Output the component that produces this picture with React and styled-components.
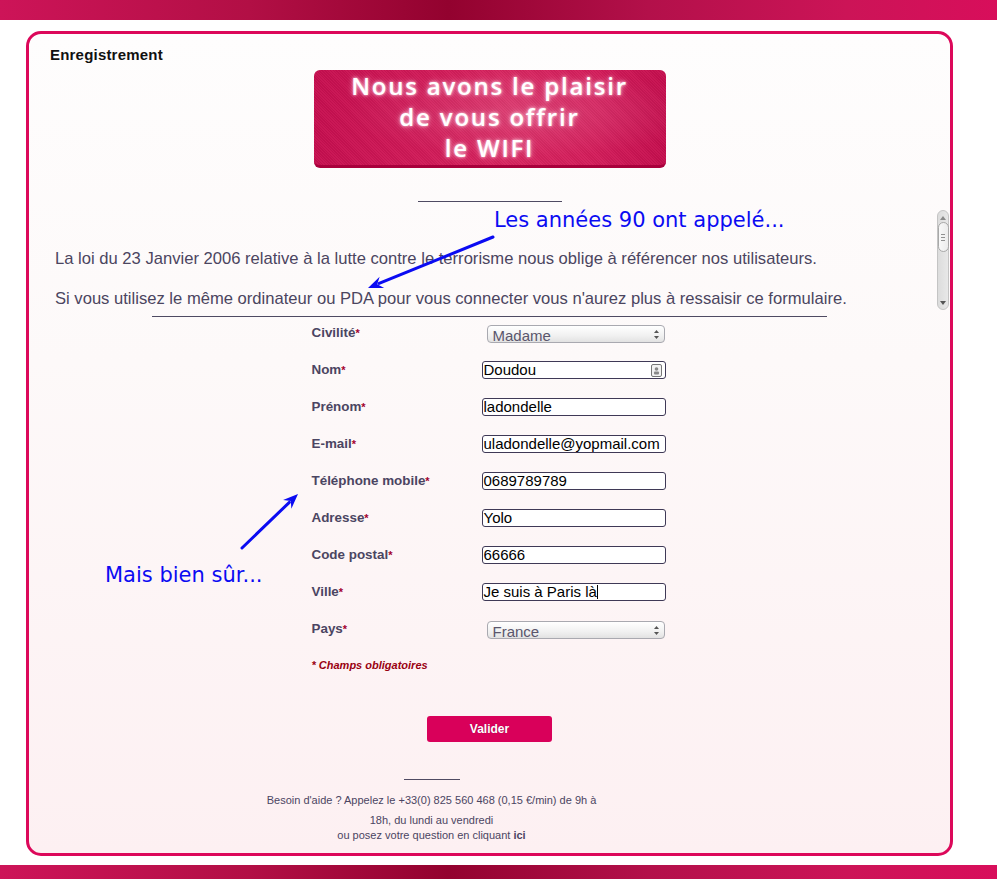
import React from "react";
import styled, { createGlobalStyle } from "styled-components";

const GlobalStyle = createGlobalStyle`
  html, body { margin: 0; padding: 0; background: #ffffff; }
  body { font-family: "Liberation Sans", Arial, sans-serif; overflow: hidden; }
  * { box-sizing: border-box; }
`;

const barGradient = `linear-gradient(90deg, #cd1458 0%, #b20f45 25%, #93022f 45%, #b3104a 65%, #cc1457 85%, #d80e5b 100%)`;

const Page = styled.div`
  position: relative;
  width: 997px;
  height: 879px;
  display: flex;
  flex-direction: column;
`;

const Bar = styled.div`
  height: ${(p) => p.$h}px;
  flex: none;
  background: ${barGradient};
`;

const Card = styled.div`
  margin: 11px 0 9px 26px;
  width: 927px;
  border: 3px solid #dc085a;
  border-radius: 15px;
  background: linear-gradient(180deg, #fefdfd 0%, #fdf9f9 40%, #fdf0f2 100%);
  display: flex;
  flex-direction: column;
  padding: 12px 0 11px 0;
  flex: none;
`;

const Title = styled.h1`
  margin: 0 0 0 21px;
  font-size: 15px;
  line-height: 18px;
  font-weight: bold;
  color: #111;
  letter-spacing: 0.2px;
`;

const Banner = styled.div`
  align-self: center;
  margin-top: 6px;
  width: 352px;
  height: 98px;
  border-radius: 6px;
  border-bottom: 3px solid #a9003c;
  background:
    radial-gradient(ellipse at 60% 45%, rgba(255,255,255,0.12) 0%, rgba(255,255,255,0) 60%),
    repeating-linear-gradient(45deg, rgba(0,0,0,0.04) 0 1px, rgba(255,255,255,0.03) 1px 2px),
    linear-gradient(90deg, #c70f50 0%, #d11a58 30%, #d82560 55%, #d41d5b 80%, #c50e4e 100%);
  display: flex;
  flex-direction: column;
  align-items: center;
  justify-content: center;
  padding-bottom: 2px;
`;

const BannerLine = styled.div`
  color: #ffffff;
  font-family: "Open Sans", "DejaVu Sans", sans-serif;
  font-weight: 600;
  font-size: 24px;
  line-height: 31px;
  letter-spacing: 1.8px;
  text-shadow: 0 0 3px rgba(255, 230, 240, 0.95), 0 0 6px rgba(255, 200, 220, 0.7);
`;

const Rule = styled.div`
  align-self: center;
  width: ${(p) => p.$w}px;
  height: 1px;
  background: #4f4a62;
  margin-top: ${(p) => p.$mt}px;
`;

const ScrollBox = styled.div`
  margin-top: 8px;
  height: 100px;
  display: flex;
  flex-direction: row;
  padding-left: 26px;
  padding-right: 1px;
`;

const ScrollContent = styled.div`
  flex: 1;
  overflow: hidden;
  padding-top: 40px;
  display: flex;
  flex-direction: column;
  gap: 22px;
`;

const Para = styled.p`
  margin: 0;
  font-size: 16.6px;
  line-height: 18px;
  color: #4b4560;
  white-space: nowrap;
`;

const ScrollTrack = styled.div`
  width: 12px;
  height: 100px;
  border: 1px solid #c4c4c4;
  border-radius: 6px;
  background: linear-gradient(90deg, #dcdcdc, #e8e8e8);
  display: flex;
  flex-direction: column;
  align-items: center;
  padding: 2px 0;
`;

const ScrollArrow = styled.div`
  height: 9px;
  width: 10px;
  display: flex;
  align-items: center;
  justify-content: center;
  flex: none;
`;

const ScrollThumb = styled.div`
  width: 11px;
  height: 30px;
  border: 1px solid #a8a8a8;
  border-radius: 6px;
  background: linear-gradient(90deg, #f8f8f8, #ececec);
  display: flex;
  flex-direction: column;
  align-items: center;
  justify-content: center;
  gap: 2px;
  flex: none;
`;

const Grip = styled.div`
  width: 4px;
  height: 1px;
  background: #909090;
`;

const ScrollFill = styled.div`
  flex: 1;
`;

const Form = styled.div`
  align-self: center;
  margin-top: 8px;
  margin-left: -2px;
  width: 354px;
  display: grid;
  grid-template-columns: 170px 184px;
  grid-auto-rows: 37px;
`;

const Label = styled.div`
  font-size: 13.4px;
  font-weight: bold;
  line-height: 15px;
  color: #4b4562;
`;

const Star = styled.span`
  color: #a3002f;
  font-size: 11px;
`;

const Input = styled.div`
  height: 18px;
  margin-top: -1px;
  border: 1px solid #3f3956;
  border-radius: 3px;
  background: #ffffff;
  font-size: 15px;
  line-height: 16px;
  color: #000;
  padding-left: 1px;
  white-space: nowrap;
  overflow: hidden;
  display: flex;
  align-items: center;
  justify-content: space-between;
`;

const Caret = styled.span`
  display: inline-block;
  width: 1px;
  height: 14px;
  background: #000;
  vertical-align: -2px;
`;

const Select = styled.div`
  height: 18px;
  margin-left: 5px;
  width: 178px;
  border: 1px solid #a9a9b0;
  border-radius: 4px;
  background: linear-gradient(180deg, #ffffff 0%, #f1f1f1 60%, #e2e2e2 100%);
  font-size: 15px;
  line-height: 16px;
  color: #5a566c;
  padding-left: 5px;
  padding-right: 4px;
  overflow: hidden;
  display: flex;
  justify-content: space-between;
`;

const SelectText = styled.span`
  margin-top: 2px;
`;

const Arrows = styled.svg`
  margin-top: 3px;
  flex: none;
`;

const Required = styled.div`
  grid-column: 1 / 3;
  font-size: 11px;
  font-weight: bold;
  font-style: italic;
  color: #990011;
  line-height: 15px;
`;

const Button = styled.button`
  align-self: center;
  margin-top: 21px;
  width: 125px;
  height: 26px;
  border: none;
  border-radius: 3px;
  background: #d9005a;
  color: #ffffff;
  font-family: "Liberation Sans", Arial, sans-serif;
  font-weight: bold;
  font-size: 12px;
  padding: 0;
  text-shadow: 0 0 1px rgba(0,0,0,0.3);
`;

const Footer = styled.div`
  display: flex;
  flex-direction: column;
  align-items: center;
  padding-right: 116px;
`;

const FootLine = styled.div`
  font-size: 11px;
  line-height: 14px;
  color: #4b4562;
  margin-top: ${(p) => p.$mt}px;
  white-space: nowrap;
`;

const Annotation = styled.div`
  position: absolute;
  left: ${(p) => p.$x}px;
  top: ${(p) => p.$y}px;
  font-family: "DejaVu Sans", sans-serif;
  font-size: 21px;
  line-height: 26px;
  color: #0b0bf2;
  white-space: nowrap;
`;

const Overlay = styled.svg`
  position: absolute;
  left: 0;
  top: 0;
  pointer-events: none;
`;

function Arrow({ x1, y1, x2, y2 }) {
  const ang = Math.atan2(y2 - y1, x2 - x1);
  const L = 15, W = 6;
  const bx = x2 - L * Math.cos(ang), by = y2 - L * Math.sin(ang);
  const px = -Math.sin(ang) * W, py = Math.cos(ang) * W;
  const ex = x2 - (L - 3) * Math.cos(ang), ey = y2 - (L - 3) * Math.sin(ang);
  return (
    <g>
      <line x1={x1} y1={y1} x2={ex} y2={ey} stroke="#0b0bf2" strokeWidth="3" strokeLinecap="round" />
      <polygon
        points={`${x2},${y2} ${bx + px},${by + py} ${x2 - (L - 5) * Math.cos(ang)},${y2 - (L - 5) * Math.sin(ang)} ${bx - px},${by - py}`}
        fill="#0b0bf2"
      />
    </g>
  );
}

const updown = (
  <Arrows width="7" height="11" viewBox="0 0 7 11">
    <polygon points="3.5,1 6,4 1,4" fill="#555" />
    <polygon points="3.5,10 6,7 1,7" fill="#555" />
  </Arrows>
);

const ContactIcon = () => (
  <svg width="11" height="13" viewBox="0 0 11 13" style={{ marginRight: 3, flex: "none" }}>
    <rect x="0.5" y="0.5" width="10" height="12" rx="1.5" fill="#f2f2f2" stroke="#777" />
    <circle cx="5.5" cy="5" r="1.8" fill="#888" />
    <rect x="3" y="7.5" width="5" height="3" rx="1" fill="#888" />
  </svg>
);

const fields = [
  { label: "Civilité", select: "Madame" },
  { label: "Nom", value: "Doudou", icon: true },
  { label: "Prénom", value: "ladondelle" },
  { label: "E-mail", value: "uladondelle@yopmail.com" },
  { label: "Téléphone mobile", value: "0689789789" },
  { label: "Adresse", value: "Yolo" },
  { label: "Code postal", value: "66666" },
  { label: "Ville", value: "Je suis à Paris là", caret: true },
  { label: "Pays", select: "France" },
];

export default function App() {
  return (
    <>
      <GlobalStyle />
      <Page>
        <Bar $h={20} />
        <Card>
          <Title>Enregistrement</Title>
          <Banner>
            <BannerLine>Nous avons le plaisir</BannerLine>
            <BannerLine>de vous offrir</BannerLine>
            <BannerLine>le WIFI</BannerLine>
          </Banner>
          <Rule $w={144} $mt={33} />
          <ScrollBox>
            <ScrollContent>
              <Para>La loi du 23 Janvier 2006 relative à la lutte contre le terrorisme nous oblige à référencer nos utilisateurs.</Para>
              <Para>Si vous utilisez le même ordinateur ou PDA pour vous connecter vous n'aurez plus à ressaisir ce formulaire.</Para>
            </ScrollContent>
            <ScrollTrack>
              <ScrollArrow>
                <svg width="6" height="4" viewBox="0 0 6 4"><polygon points="3,0 6,4 0,4" fill="#8a8a8a" /></svg>
              </ScrollArrow>
              <ScrollThumb>
                <Grip />
                <Grip />
                <Grip />
              </ScrollThumb>
              <ScrollFill />
              <ScrollArrow>
                <svg width="6" height="4" viewBox="0 0 6 4"><polygon points="0,0 6,0 3,4" fill="#555" /></svg>
              </ScrollArrow>
            </ScrollTrack>
          </ScrollBox>
          <Rule $w={675} $mt={6} />
          <Form>
            {fields.map((f) => (
              <React.Fragment key={f.label}>
                <Label>
                  {f.label}
                  <Star>*</Star>
                </Label>
                {f.select ? (
                  <Select>
                    <SelectText>{f.select}</SelectText>
                    {updown}
                  </Select>
                ) : (
                  <Input>
                    <span>
                      {f.value}
                      {f.caret && <Caret />}
                    </span>
                    {f.icon && <ContactIcon />}
                  </Input>
                )}
              </React.Fragment>
            ))}
            <Required>* Champs obligatoires</Required>
          </Form>
          <Button>Valider</Button>
          <Footer>
            <Rule $w={56} $mt={37} />
            <FootLine $mt={13}>Besoin d'aide ? Appelez le +33(0) 825 560 468 (0,15 €/min) de 9h à</FootLine>
            <FootLine $mt={6}>18h, du lundi au vendredi</FootLine>
            <FootLine $mt={1}>
              ou posez votre question en cliquant <b>ici</b>
            </FootLine>
          </Footer>
        </Card>
        <Bar $h={20} />
        <Overlay width="997" height="879" viewBox="0 0 997 879">
          <Arrow x1={493} y1={237} x2={368} y2={288} />
          <Arrow x1={242} y1={548} x2={298} y2={494} />
        </Overlay>
        <Annotation $x={494} $y={207}>Les années 90 ont appelé...</Annotation>
        <Annotation $x={105} $y={562}>Mais bien sûr...</Annotation>
      </Page>
    </>
  );
}
